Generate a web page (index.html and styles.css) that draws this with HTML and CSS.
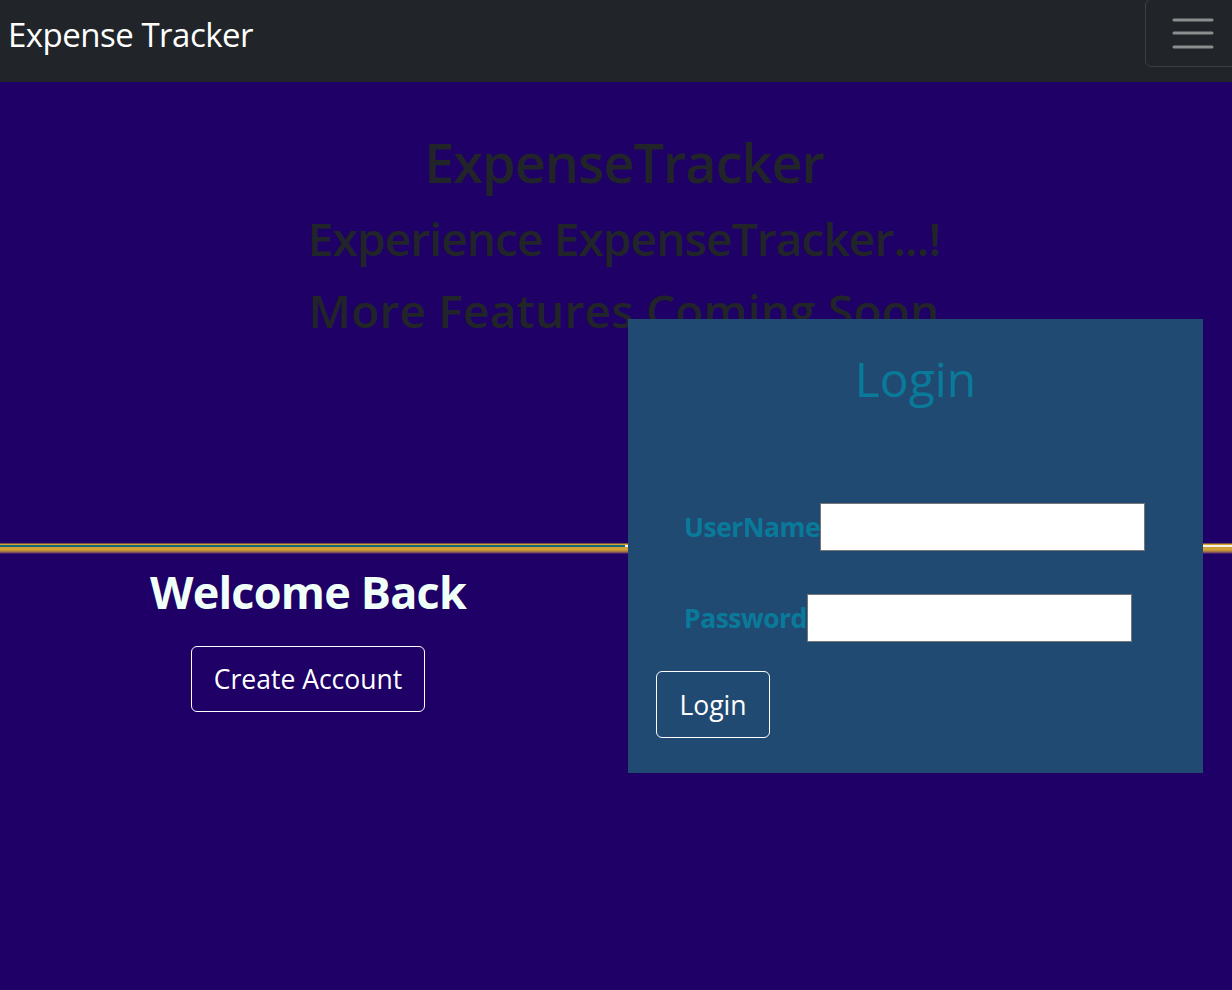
FILE: index.html
```html
<!DOCTYPE html>
<html lang="en">
<head>
<meta charset="utf-8">
<title>Expense Tracker</title>
<link rel="stylesheet" href="styles.css">
</head>
<body>
<nav class="navbar">
  <span class="brand">Expense Tracker</span>
  <button class="toggler" aria-label="Toggle navigation">
    <svg width="42" height="32" viewBox="0 0 42 32"><g stroke="#8c8d8f" stroke-width="3" stroke-linecap="round"><line x1="2" y1="3" x2="40" y2="3"/><line x1="2" y1="16" x2="40" y2="16"/><line x1="2" y1="30" x2="40" y2="30"/></g></svg>
  </button>
</nav>
<main class="page">
  <section class="intro">
    <h1 class="title">ExpenseTracker</h1>
    <h2 class="sub">Experience ExpenseTracker...!</h2>
    <h2 class="sub more">More Features Coming Soon</h2>
  </section>
  <div class="divider"></div>
  <section class="row">
    <div class="left">
      <h2 class="welcome">Welcome Back</h2>
      <button class="btn">Create Account</button>
    </div>
  </section>
  <form class="login-card">
    <h2 class="login-title">Login</h2>
    <div class="field user">
      <label>UserName</label><input type="text">
    </div>
    <div class="field pass">
      <label>Password</label><input type="password">
    </div>
    <button type="button" class="btn login-btn">Login</button>
  </form>
</main>
</body>
</html>
```
FILE: styles.css
```css
* { box-sizing: border-box; }
html, body { margin: 0; padding: 0; }
body {
  font-family: "Open Sans", "Noto Sans", sans-serif;
  background: #1e0066;
  color: #212529;
  min-height: 990px;
}
.navbar {
  height: 82px;
  background: #212529;
  display: flex;
  justify-content: space-between;
  align-items: flex-start;
}
.brand {
  color: #fff;
  font-size: 33px;
  line-height: 70px;
  padding-left: 8px;
  letter-spacing: -0.5px;
}
.toggler {
  width: 100px;
  height: 68px;
  margin-right: -13px;
  margin-top: -1px;
  background: transparent;
  border: 1px solid rgba(255,255,255,0.12);
  border-radius: 6px;
  padding: 0 0 0 26px;
  display: flex;
  align-items: center;
}
.page { position: relative; }
.intro { text-align: center; padding: 40px 0 0 16px; }
.title {
  margin: 0;
  font-size: 54px;
  font-weight: 600;
  line-height: 80px;
  letter-spacing: -1px;
}
.sub {
  margin: 0;
  font-size: 46px;
  font-weight: 600;
  line-height: 72px;
  letter-spacing: -0.9px;
}
.more { letter-spacing: 0.2px; }
.divider {
  margin-top: 197px;
  height: 11px;
  background:
    linear-gradient(to right, #0e6a7a 0, #0e6a7a 50.7%, #f4f2e8 50.7%, #f4f2e8 100%) 0 2px / 100% 2px no-repeat,
    linear-gradient(to bottom, #1e0066 0, #d7a42e 1px, #d7a42e 2px, #c99a33 4px, #d9a63a 6px, #b88a3a 8px, #6a3a6a 10px, #1e0066 11px);
}
.row { display: flex; }
.left {
  width: 616px;
  text-align: center;
}
.welcome {
  margin: 8px 0 0;
  color: #f0fff8;
  font-size: 45px;
  font-weight: 700;
  line-height: 60px;
  letter-spacing: -0.8px;
}
.btn {
  font-family: inherit;
  background: transparent;
  color: #fff;
  border: 1px solid #fff;
  border-radius: 6px;
  font-size: 26.5px;
  padding: 0;
  height: 66px;
}
.left .btn { margin-top: 24px; width: 234px; }
.login-card {
  position: absolute;
  left: 628px;
  top: 237px;
  width: 575px;
  height: 454px;
  background: #204a72;
  padding: 20px 28px 0;
}
.login-title {
  margin: 0;
  text-align: center;
  color: #0a7a9a;
  font-size: 48px;
  font-weight: 500;
  line-height: 80px;
}
.field {
  display: flex;
  align-items: center;
  padding-left: 28px;
}
.field label {
  color: #0a7a9a;
  font-weight: 700;
  font-size: 26.5px;
  letter-spacing: -0.5px;
}
.field input {
  height: 48px;
  width: 325px;
  border: 1px solid #767676;
  background: #fff;
  margin: 0;
  padding: 0;
}
.user { margin-top: 84px; }
.pass { margin-top: 43px; }
.login-btn { margin-top: 29px; width: 114px; height: 67px; }
```
